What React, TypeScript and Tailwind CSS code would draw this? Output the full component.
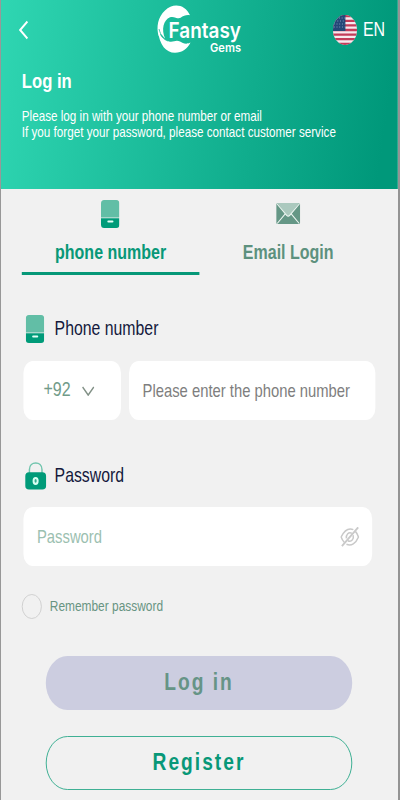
import type { ReactNode } from "react";

function PhoneIcon({ className }: { className: string }) {
  return (
    <svg className={className} viewBox="0 0 18 28" preserveAspectRatio="none">
      <path d="M0 17.5V3.5Q0 0 3 0H15Q18 0 18 3.5V17.5Z" fill="#62bea6" />
      <path d="M0 18.2H18V24.5Q18 28 15 28H3Q0 28 0 24.5Z" fill="#009b79" />
      <rect x="6.2" y="20.4" width="6" height="2" rx="1" fill="#e2fff6" />
    </svg>
  );
}

function MailIcon() {
  return (
    <svg className="h-[21px] w-[30px]" viewBox="0 0 24 21" preserveAspectRatio="none">
      <rect width="24" height="21" rx="1.5" fill="#659786" />
      <path d="M1 0H23L13.5 12.5Q12 14 10.5 12.5Z" fill="#abc9be" />
      <path d="M0.5 0.5L10.5 12.3Q12 14 13.5 12.3L23.5 0.5M1 20.5L9 10.8M23 20.5L15 10.8" fill="none" stroke="#edf5f1" strokeWidth="1.1" />
    </svg>
  );
}

function LockIcon() {
  return (
    <svg className="h-7 w-[27px]" viewBox="0 0 22 28" preserveAspectRatio="none">
      <path d="M4.5 11V7.5C4.5 -1.2 17.3 -1.2 17.3 7.5V11" fill="none" stroke="#72c5ae" strokeWidth="1.5" />
      <rect x="0.3" y="10.3" width="21.2" height="17.2" rx="3.8" fill="#009b79" />
      <ellipse cx="10.8" cy="18.9" rx="3.1" ry="4" fill="#d8fff2" />
      <ellipse cx="10.8" cy="18.9" rx="1.1" ry="1.8" fill="#35ab90" />
    </svg>
  );
}

function HiddenEyeIcon() {
  return (
    <svg className="h-5 w-6" viewBox="0 0 19 20" preserveAspectRatio="none" fill="none" stroke="#c9c9c9" strokeWidth="1.5">
      <path d="M13 2.6C8 0.6 4 3.6 0.9 10C1.8 12.4 2.7 14 4 15.3M6.2 17.3C11 19.4 15.4 16.5 18.1 10C17.2 7.3 16.2 5.6 15 4.4" />
      <path d="M11.6 6.3C8.3 4.6 5.7 7.4 6.1 11.4M7.6 13.8C11.5 15.6 13.7 11.4 12.8 8.2" />
      <path d="M17.8 0.3L1.7 19.2" strokeWidth="1.8" />
    </svg>
  );
}

function Logo() {
  return (
    <svg className="h-[52px] w-[108px] overflow-visible" viewBox="157 5 86.4 52" preserveAspectRatio="none">
      <path d="M190 15.2C185 4.2 173 2.6 165 10.5C158 17 156 27 158.7 36C160.5 32 162.5 35.5 165.2 38.8C161 29 163.5 20 170 17.2C174.5 15.8 177.5 19.5 180.6 17.8C183.5 15.6 186.5 14.6 190 15.2Z" fill="#fff" />
      <path d="M158 31C159.5 45 166 52.8 175 52.8C182 52.8 187.5 49 190.5 42.5C186 44.8 183 43.3 180 41.6C176 39.5 173.5 42.5 169 41.4C164 40.2 160.8 36.5 158 31Z" fill="#fff" />
      <path d="M159 29C160.6 35.2 163.7 39.8 168 41" fill="none" stroke="#20bd9c" strokeWidth="0.8" />
      <text x="168.6" y="38" textLength="72.4" lengthAdjust="spacingAndGlyphs" fill="#fff" fontFamily="Inter, sans-serif" fontWeight="600" fontSize="22">Fantasy</text>
      <text x="210" y="52" textLength="31" lengthAdjust="spacingAndGlyphs" fill="#fff" fontFamily="Inter, sans-serif" fontWeight="600" fontSize="12">Gems</text>
    </svg>
  );
}

function Flag() {
  return (
    <svg className="h-[30px] w-[30px]" viewBox="0 0 30 30">
      <defs>
        <clipPath id="disc"><circle cx="15" cy="15" r="15" /></clipPath>
      </defs>
      <g clipPath="url(#disc)">
        <rect width="30" height="30" fill="#f7e9ee" />
        <path d="M0 1.2H30M0 5.8H30M0 10.4H30M0 15H30M0 19.6H30M0 24.2H30M0 28.8H30" stroke="#c33b59" strokeWidth="2.3" />
        <rect width="15.5" height="16" fill="#244777" />
        <path d="M4 3H15M2 6H15M1 9H15M1 12H15" stroke="#8da5c5" strokeWidth="1" strokeDasharray="1.2 2.2" />
      </g>
    </svg>
  );
}

function Tab({ icon, label, active }: { icon: ReactNode; label: string; active?: boolean }) {
  return (
    <div className={`flex h-[79px] w-[222px] flex-col items-center border-b-[3px] ${active ? "border-[#069878] text-[#089878]" : "border-transparent text-[#5d917e]"}`}>
      <div className="flex h-[35px] items-center">{icon}</div>
      <span className="mt-[9px] text-[20px] leading-6 font-bold">{label}</span>
    </div>
  );
}

export default function App() {
  return (
    <div className="h-[800px] w-[400px] overflow-hidden border-r-2 border-l border-r-[#949494] border-l-[#989898] bg-[#f1f1f1]">
      <main className="h-[800px] w-[496.25px] origin-top-left scale-x-80 bg-[#f1f1f1] font-['Liberation_Sans',Arial,sans-serif]">
        <header className="h-[189px] bg-linear-[100deg] from-[#2fd6b2] to-[#00987a] to-95% text-white">
          <div className="flex h-[60px] items-center justify-between pr-[16px] pl-[22px]">
            <svg className="h-5 w-3" viewBox="0 0 12 20" fill="none" stroke="white" strokeWidth="2.4">
              <path d="M11 1.5L2 10L11 18.5" />
            </svg>
            <div className="mt-[2px] ml-[48px]"><Logo /></div>
            <div className="flex items-center gap-[7px] text-[20px]"><Flag /><span className="-mt-[2px] leading-6">EN</span></div>
          </div>
          <h1 className="mt-[9px] ml-[26px] text-[20.8px] leading-6 font-bold">Log in</h1>
          <p className="mt-[15px] ml-[26px] text-[14.6px] leading-4 whitespace-nowrap">
            Please log in with your phone number or email<br />
            If you forget your password, please contact customer service
          </p>
        </header>

        <nav className="flex px-[26px] pt-[7px]">
          <Tab active icon={<PhoneIcon className="-ml-[2px] h-7 w-[23px]" />} label="phone number" />
          <Tab icon={<MailIcon />} label="Email Login" />
        </nav>

        <section className="mt-[40px] pr-[28px] pl-[28px] text-[20px]">
          <div className="flex h-7 items-center gap-[13px] pl-[3px] text-[19.8px] text-[#14193c]">
            <PhoneIcon className="h-7 w-[23px]" /><label>Phone number</label>
          </div>
          <div className="mt-[18px] flex h-[59px] gap-[10px]">
            <button className="flex w-[122px] items-center gap-[14px] rounded-xl bg-white pl-[25px] text-[#719b89]">
              <span className="-mt-1">+92</span>
              <svg className="h-[10px] w-4" viewBox="0 0 16 10" fill="none" stroke="#829187" strokeWidth="1.8"><path d="M1 1L8 9L15 1" /></svg>
            </button>
            <input className="w-[308px] rounded-xl bg-white px-[17px] text-[18.5px] outline-none placeholder:text-[#7e7e7e]" placeholder="Please enter the phone number" />
          </div>
        </section>

        <section className="mt-[42px] pl-[28px] text-[20px]">
          <div className="flex h-7 items-center gap-[10px] pl-[2px] text-[19.8px] text-[#14193c]"><LockIcon /><label>Password</label></div>
          <div className="mt-[17px] flex h-[59px] w-[436px] items-center rounded-xl bg-white pr-[16px] pl-[17px]">
            <input className="w-0 flex-1 text-[18.5px] outline-none placeholder:text-[#9bc0b0]" placeholder="Password" />
            <HiddenEyeIcon />
          </div>
          <label className="mt-[27px] -ml-[2px] flex h-[26px] items-center gap-[10px] text-[14.9px] text-[#689482]">
            <span className="size-[25px] rounded-full border border-[#cdcdcd]" />Remember password
          </label>
        </section>

        <div className="mt-[37px] ml-[56px] flex w-[383px] flex-col gap-[26px] text-center text-[24px] font-bold tracking-[2.5px]">
          <button className="h-[54px] rounded-full bg-[#cccde0] pb-[3px] text-[#669486]">Log in</button>
          <button className="h-[54px] rounded-full border border-[#2aa889] pb-[2px] text-[#089878]">Register</button>
        </div>
      </main>
    </div>
  );
}
